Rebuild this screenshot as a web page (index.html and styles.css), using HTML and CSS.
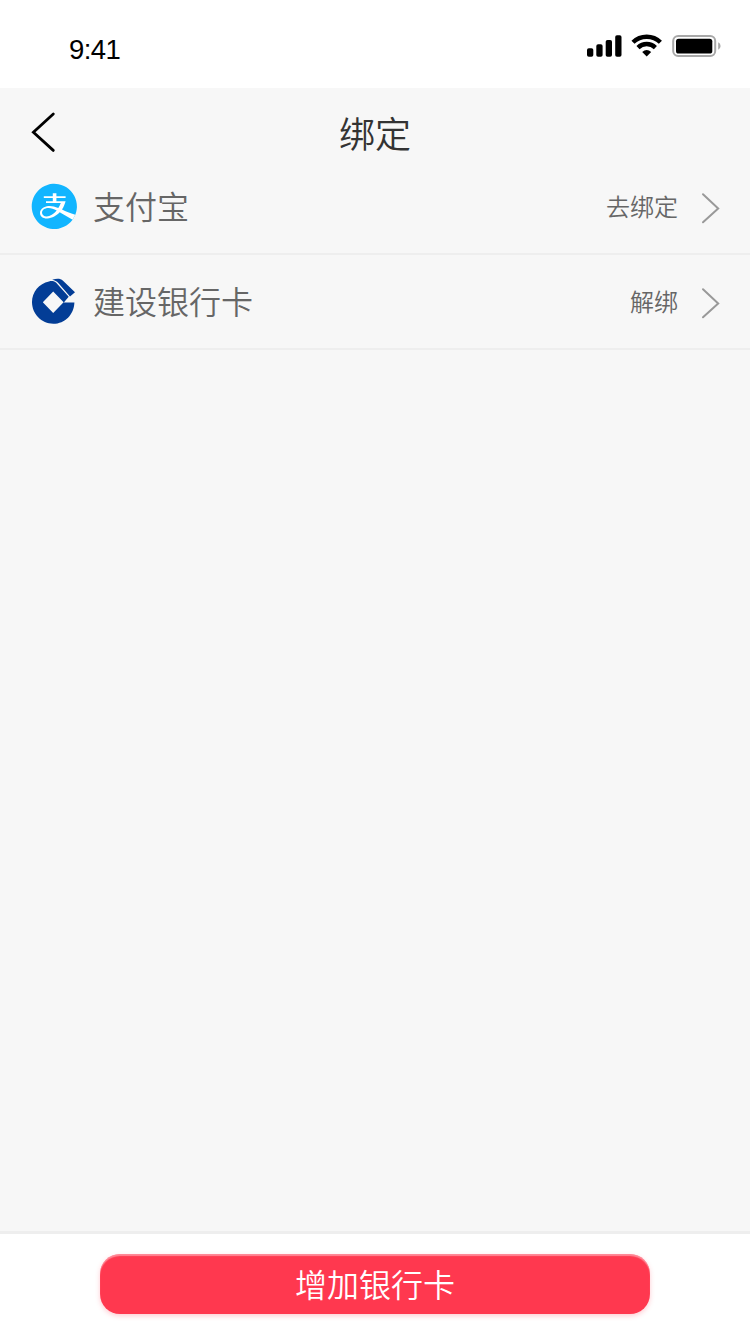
FILE: index.html
```html
<!DOCTYPE html>
<html lang="zh-CN">
<head>
<meta charset="utf-8">
<title>绑定</title>
<link rel="stylesheet" href="styles.css">
</head>
<body>
<div class="screen">
  <div class="status-bar">
    <span class="time">9:41</span>
    <svg class="status-icons" viewBox="0 0 136 28" width="136" height="28">
      <rect x="2" y="14.3" width="6.3" height="8.4" rx="1.8"/>
      <rect x="11.3" y="10.3" width="6.3" height="12.4" rx="1.8"/>
      <rect x="20.7" y="6" width="6.3" height="16.7" rx="1.8"/>
      <rect x="30.2" y="1.3" width="6.3" height="21.4" rx="1.8"/>
      <g fill="none" stroke="#000" stroke-width="4.4">
        <path d="M48 8.3C55.5.9 67.9.9 75.4 8.3"/>
        <path d="M53 13.6C58 8.8 65.4 8.8 70.4 13.6"/>
      </g>
      <path d="M57.2 18Q61.7 14 66.2 18L61.7 22.6Z"/>
      <rect x="88.2" y="2" width="42" height="20" rx="5" fill="none" stroke="#a8a8a8" stroke-width="2"/>
      <rect x="91" y="4.7" width="36.3" height="14.8" rx="2.6"/>
      <path d="M133.2 8.3Q135.6 9.5 135.6 12T133.2 15.8Z" fill="#a8a8a8"/>
    </svg>
  </div>
  <div class="nav-bar">
    <svg class="back" viewBox="0 0 26 42" width="26" height="42">
      <path d="M23.3 3L3.4 21.2L23.3 39.4" fill="none" stroke="#000" stroke-width="2.8" stroke-linecap="round"/>
    </svg>
    <h1 class="title">绑定</h1>
  </div>
  <div class="row">
    <svg class="logo" viewBox="0 0.5 46 46" width="46" height="46">
      <path d="M43.3 31.3L40.6 36.2A22.6 22.6 0 1 1 43.3 31.3Z" fill="#12b5ff"/>
      <path d="M24.4 9.8H20.8V12.8H11.8V14.6H20.8V17.8H14V19.6H28.8C28.2 21.3 27.4 22.9 26.3 24.6C22 22.7 18.1 22 14.8 22.8C10.7 23.8 8 26.4 8 29.5C8 32.9 11.1 35.2 15.3 35C20.3 34.8 24.7 32 27.7 28.8L40.6 36.2L43.3 31.3C38 29.8 33.9 28 30 26.1C31.9 23.2 32.8 20.5 33.6 17.8H24.4V14.6H33.6V12.8H24.4ZM10 29C10.1 26.4 12.7 24.5 16.2 24.4C19 24.3 21.8 25.4 24.7 27C21.6 30.5 18.1 32.9 14.6 32.9C11.8 32.9 9.9 31.4 10 29Z" fill="#fff" fill-rule="evenodd"/>
    </svg>
    <span class="name">支付宝</span>
    <span class="action">去绑定</span>
    <svg class="arrow" viewBox="0 0 20 32" width="20" height="32"><path d="M3 2.3L18.2 16.4L3 30.3"/></svg>
  </div>
  <div class="row">
    <svg class="logo" viewBox="0 0.5 46 46" width="46" height="46">
      <path fill="#033d96" fill-rule="evenodd" d="M17 3C19.5 2.2 22.5 2.5 24.2 4.2L36.7 18.3L31.8 23.9H42.4C42 36 33 45.2 21.3 45.2C9.5 45.2 0 35.5 0 23.6C0 13.5 7 5.2 17 3ZM21.2 13L10.8 23.8L21.2 34.6L31.6 23.8Z"/>
      <path fill="#033d96" d="M20.2 1.2C24.8 0 28.2-.2 31 2.2L43 13.8L38 18L26.3 4.5C24.8 2.8 22.8 1.6 20.2 1.2Z"/>
    </svg>
    <span class="name">建设银行卡</span>
    <span class="action">解绑</span>
    <svg class="arrow" viewBox="0 0 20 32" width="20" height="32"><path d="M3 2.3L18.2 16.4L3 30.3"/></svg>
  </div>
  <div class="footer">
    <button class="add-card" type="button">增加银行卡</button>
  </div>
</div>
</body>
</html>
```

FILE: styles.css
```css
* { box-sizing: border-box; }
body {
  margin: 0;
  font-family: "Noto Sans CJK SC", sans-serif;
  font-weight: 350;
}
.screen {
  display: flex;
  flex-direction: column;
  width: 750px;
  height: 1334px;
  background: #f7f7f7;
}
.status-bar {
  display: flex;
  justify-content: space-between;
  height: 88px;
  padding: 34px 29px 0 69px;
  background: #fff;
}
.time {
  font: 400 27.5px/32px "Liberation Sans", Arial, sans-serif;
  letter-spacing: -0.6px;
  color: #000;
}
.status-icons { display: block; }
.nav-bar {
  display: grid;
  grid-template-columns: 26px 1fr 26px;
  align-items: center;
  height: 72px;
  padding: 16px 30px 0;
}
.title {
  margin: 0;
  font-size: 36px;
  line-height: 52px;
  font-weight: 350;
  text-align: center;
  color: #333;
}
.row {
  display: flex;
  align-items: center;
  height: 95px;
  padding: 0 30px 0 32px;
  border-bottom: 2px solid #eee;
}
.logo { flex: none; overflow: visible; }
.name {
  margin-left: 15px;
  padding-bottom: 4px;
  font-size: 32px;
  line-height: 46px;
  color: #666;
}
.action {
  margin-left: auto;
  padding-bottom: 2px;
  font-size: 24px;
  line-height: 36px;
  color: #666;
}
.arrow { margin: 2px 0 0 22px; }
.arrow path {
  fill: none;
  stroke: #999;
  stroke-width: 2;
  stroke-linecap: round;
}
.footer {
  display: flex;
  justify-content: center;
  height: 103px;
  margin-top: auto;
  padding-top: 20px;
  border-top: 3px solid #eee;
  background: #fff;
}
.add-card {
  width: 550px;
  height: 60px;
  padding: 0 0 2px;
  border: 0;
  border-radius: 20px;
  background: #ff384f;
  box-shadow: 0 2px 5px rgba(255, 56, 79, .25), inset 0 2px 1px rgba(255, 255, 255, .4);
  color: #fff;
  font: inherit;
  font-size: 32px;
  line-height: 58px;
}
```
